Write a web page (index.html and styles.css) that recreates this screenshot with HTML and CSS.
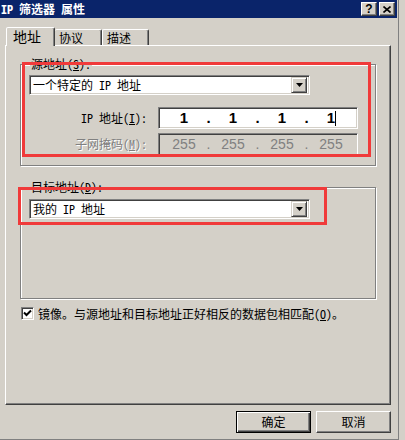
FILE: index.html
```html
<!DOCTYPE html>
<html lang="zh-CN">
<head>
    <meta charset="UTF-8">
    <title>IP 筛选器 属性</title>
    <link rel="stylesheet" href="styles.css">
</head>
<body>
    <div class="window">
        <div class="titlebar">
            <span class="title">IP 筛选器 属性</span>
            <div class="title-btns">
                <span class="tbtn help">?</span>
                <span class="tbtn">
                    <svg width="8" height="7" viewBox="0 0 8 7"><path d="M0.5 0.5 L7.5 6.5 M7.5 0.5 L0.5 6.5" stroke="#000" stroke-width="1.6"/></svg>
                </span>
            </div>
        </div>

        <div class="tabs">
            <div class="tab active">地址</div>
            <div class="tab">协议</div>
            <div class="tab">描述</div>
        </div>

        <div class="panel">
            <fieldset class="group group-src">
                <legend>源地址(<u>S</u>):</legend>
                <div class="combo">
                    <span class="combo-text">一个特定的 IP 地址</span>
                    <span class="combo-btn"><svg width="7" height="4" viewBox="0 0 7 4"><path d="M0 0 H7 L3.5 4 Z" fill="#000"/></svg></span>
                </div>
                <div class="field-row">
                    <label class="field-label">IP 地址(<u>I</u>):</label>
                    <div class="ipbox">
                        <span class="octet">1</span><span class="dot">.</span>
                        <span class="octet">1</span><span class="dot">.</span>
                        <span class="octet">1</span><span class="dot">.</span>
                        <span class="octet">1<span class="caret"></span></span>
                    </div>
                </div>
                <div class="field-row disabled">
                    <label class="field-label">子网掩码(<u>M</u>):</label>
                    <div class="ipbox">
                        <span class="octet">255</span><span class="dot">.</span>
                        <span class="octet">255</span><span class="dot">.</span>
                        <span class="octet">255</span><span class="dot">.</span>
                        <span class="octet">255</span>
                    </div>
                </div>
            </fieldset>

            <fieldset class="group group-dst">
                <legend>目标地址(<u>D</u>):</legend>
                <div class="combo">
                    <span class="combo-text">我的 IP 地址</span>
                    <span class="combo-btn"><svg width="7" height="4" viewBox="0 0 7 4"><path d="M0 0 H7 L3.5 4 Z" fill="#000"/></svg></span>
                </div>
            </fieldset>

            <div class="check-row">
                <span class="checkbox">
                    <svg width="9" height="9" viewBox="0 0 9 9"><path d="M1 3.5 L3.5 6 L8 1.5" fill="none" stroke="#000" stroke-width="2"/></svg>
                </span>
                <span>镜像。与源地址和目标地址正好相反的数据包相匹配(<u>O</u>)。</span>
            </div>

            <div class="mark mark-src"></div>
            <div class="mark mark-dst"></div>
        </div>

        <div class="actions">
            <button class="btn default">确定</button>
            <button class="btn">取消</button>
        </div>
    </div>
</body>
</html>
```

FILE: styles.css
```css
* {
    margin: 0;
    padding: 0;
    box-sizing: border-box;
}
body {
    background: #d4d0c8;
    font-family: "Noto Sans Mono CJK SC", "Noto Sans CJK SC", sans-serif;
    font-size: 12px;
    line-height: 14px;
    color: #000;
}
u {
    text-decoration: underline;
    text-underline-offset: 1px;
}
.window {
    width: 399px;
    height: 440px;
    padding-right: 1px;
    background: #d4d0c8;
    border-right: 1px solid #808080;
    border-bottom: 1px solid #808080;
}

/* title bar */
.titlebar {
    height: 18px;
    background: #0a246a;
    display: flex;
    align-items: center;
    justify-content: space-between;
    padding: 0 2px 0 1px;
}
.title {
    color: #fff;
    font-weight: bold;
    font-size: 12px;
}
.title-btns {
    display: flex;
    gap: 2px;
}
.tbtn {
    width: 16px;
    height: 14px;
    display: flex;
    align-items: center;
    justify-content: center;
    background: #d4d0c8;
    border: 1px solid;
    border-color: #fff #404040 #404040 #fff;
    box-shadow: inset -1px -1px #808080;
    font-family: "Liberation Sans", sans-serif;
    font-weight: bold;
    font-size: 12px;
}

/* tabs */
.tabs {
    display: flex;
    align-items: flex-end;
    padding-left: 6px;
    height: 28px;
    position: relative;
    z-index: 1;
    margin-bottom: -1px;
}
.tab {
    height: 16px;
    width: 47px;
    padding-left: 4px;
    border: 1px solid;
    border-bottom: none;
    border-color: #fff #404040 transparent #fff;
    box-shadow: inset -1px 0 #808080;
    border-radius: 2px 2px 0 0;
    margin-bottom: 1px;
    line-height: 15px;
}
.tab.active {
    height: 19px;
    width: 49px;
    margin-bottom: 0;
    padding-left: 6px;
    background: #d4d0c8;
    font-size: 14px;
    line-height: 17px;
}
.tab.active + .tab {
    border-left: none;
}

/* page */
.panel {
    position: relative;
    margin-left: 5px;
    width: 386px;
    height: 360px;
    border: 1px solid;
    border-color: #fff #404040 #404040 #fff;
    box-shadow: inset -1px -1px #808080;
    padding: 11px 0 0 14px;
}
.group {
    width: 356px;
    border: 1px solid #808080;
    box-shadow: inset 1px 1px #fff, 1px 1px #fff;
    padding: 4px 9px 10px 9px;
    min-width: 0;
}
.group legend {
    padding: 0 1px;
    line-height: 14px;
    background: #d4d0c8;
}
.group-dst {
    margin-top: 14px;
    padding: 5px 9px 79px 9px;
}

.combo {
    width: 281px;
    height: 20px;
    margin-left: -1px;
    display: flex;
    align-items: center;
    background: #fff;
    border: 1px solid;
    border-color: #808080 #fff #fff #808080;
    box-shadow: inset 1px 1px #404040, inset -1px -1px #d4d0c8;
    padding: 2px;
}
.combo-text {
    flex: 1;
    padding-left: 1px;
    line-height: 16px;
}
.combo-btn {
    width: 16px;
    height: 16px;
    display: flex;
    align-items: center;
    justify-content: center;
    background: #d4d0c8;
    border: 1px solid;
    border-color: #d4d0c8 #404040 #404040 #d4d0c8;
    box-shadow: inset 1px 1px #fff, inset -1px -1px #808080;
}

.field-row {
    display: flex;
    align-items: center;
    margin-top: 12px;
}
.field-row.disabled {
    margin-top: 4px;
}
.field-label {
    width: 117px;
    text-align: right;
    margin-right: 11px;
}
.disabled .field-label {
    color: #808080;
    text-shadow: 1px 1px 0 #fff;
}
.ipbox {
    width: 200px;
    height: 22px;
    display: flex;
    align-items: center;
    background: #fff;
    border: 1px solid;
    border-color: #808080 #fff #fff #808080;
    box-shadow: inset 1px 1px #404040, inset -1px -1px #d4d0c8;
    padding-left: 5px;
    font-family: "Liberation Sans", sans-serif;
    font-size: 15px;
    font-weight: bold;
}
.octet {
    width: 40px;
    text-align: center;
    position: relative;
}
.dot {
    width: 9px;
    text-align: center;
}
.caret {
    position: absolute;
    top: 0;
    left: 24px;
    width: 1px;
    height: 15px;
    background: #000;
}
.disabled .ipbox {
    background: #d4d0c8;
    color: #808080;
    font-size: 14px;
    font-weight: normal;
}

.check-row {
    display: flex;
    align-items: center;
    gap: 4px;
    margin: 8px 0 0 1px;
    height: 13px;
}
.checkbox {
    width: 13px;
    height: 13px;
    display: flex;
    align-items: center;
    justify-content: center;
    background: #fff;
    border: 1px solid;
    border-color: #808080 #fff #fff #808080;
    box-shadow: inset 1px 1px #404040, inset -1px -1px #d4d0c8;
}

/* red annotation frames */
.mark {
    position: absolute;
    border: 3px solid #f03a3a;
}
.mark-src {
    left: 16px;
    top: 16px;
    width: 349px;
    height: 95px;
}
.mark-dst {
    left: 12px;
    top: 141px;
    width: 309px;
    height: 38px;
}

/* buttons */
.actions {
    width: 386px;
    margin: 6px 0 0 5px;
    display: flex;
    justify-content: flex-end;
    gap: 5px;
}
.btn {
    width: 75px;
    height: 22px;
    font: inherit;
    background: #d4d0c8;
    border: 1px solid;
    border-color: #fff #404040 #404040 #fff;
    box-shadow: inset -1px -1px #808080;
}
.btn.default {
    border-color: #000;
    box-shadow: inset 1px 1px #fff, inset -1px -1px #404040, inset -2px -2px #808080;
}
```
